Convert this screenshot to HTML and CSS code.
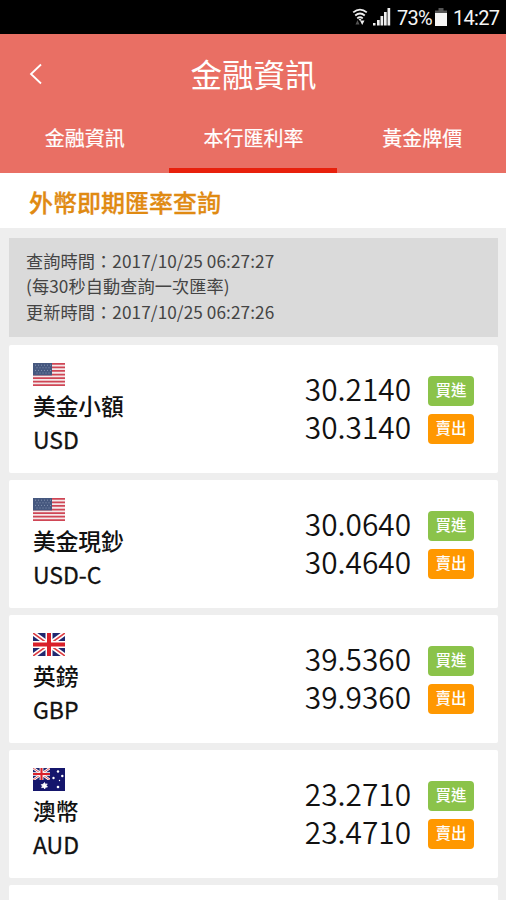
FILE: index.html
```html
<!DOCTYPE html>
<html lang="zh-Hant">
<head>
<meta charset="utf-8">
<title>金融資訊</title>
<link rel="stylesheet" href="styles.css">
</head>
<body>
<svg class="defs" width="0" height="0">
  <defs>
    <symbol id="us" viewBox="0 0 32 23">
      <rect width="32" height="23" fill="#f4e9ea"/>
      <path d="M0 .9h32M0 4.4h32M0 7.9h32M0 11.5h32M0 15h32M0 18.6h32M0 22.1h32" stroke="#cf4655" stroke-width="1.75"/>
      <rect width="19" height="12.4" fill="#46587f"/>
      <path d="M2 2.2h16M3.5 4.8h14M2 7.4h16M3.5 10h14" stroke="#8593b0" stroke-width="1" stroke-dasharray="1 2"/>
    </symbol>
    <symbol id="uk" viewBox="0 0 32 23" preserveAspectRatio="none">
      <rect width="32" height="23" fill="#20276f"/>
      <path d="M0 0l32 23M32 0L0 23" stroke="#fff" stroke-width="5"/>
      <path d="M0 0l32 23M32 0L0 23" stroke="#dc3c42" stroke-width="1.6"/>
      <path d="M16 0v23M0 11.5h32" stroke="#fff" stroke-width="7"/>
      <path d="M16 0v23M0 11.5h32" stroke="#d9202a" stroke-width="4"/>
    </symbol>
    <symbol id="au" viewBox="0 0 32 23">
      <rect width="32" height="23" fill="#15166c"/>
      <svg width="17" height="12" viewBox="0 0 32 23" preserveAspectRatio="none"><use href="#uk"/></svg>
      <path d="M11.5 14.5l.8 1.7 1.9-.3-.9 1.7 1.2 1.4-1.9.2-.9 1.7-1.2-1.5-1.9.3.8-1.7-1.2-1.4 1.9-.3z" fill="#fff" stroke="#fff" stroke-width=".7"/>
      <g fill="#fff"><circle cx="25" cy="3.5" r="1.2"/><circle cx="20.5" cy="10" r="1.2"/><circle cx="29.3" cy="8" r="1.2"/><circle cx="26.5" cy="12.5" r=".7"/><circle cx="25" cy="19" r="1.3"/></g>
    </symbol>
  </defs>
</svg>
<div class="statusbar">
  <svg class="wifi" width="16" height="20" viewBox="0 0 16 20" fill="none">
    <path d="M1.2 5.4Q8-.2 14.8 5.4M3.2 8.5Q8 4.4 12.8 8.5M5.2 11.4Q8 9 10.8 11.4" stroke="#eee" stroke-width="1.8"/>
    <path d="M6.5 12h3L8 14zM8 13.5h4.5L10.2 18z" fill="#eee"/>
    <path d="M3.5 17.5h4L5.500 13z" fill="#555"/>
  </svg>
  <svg class="signal" width="18" height="18" viewBox="0 0 18 18" fill="#eee">
    <path d="M0 15h2.500v2.500H0zM4 12h2.700v5.500H4zM7.500 8h2.700v9.500H7.500zM11 4h2.700v13.500H11zM14.500 0h2.700v17.500h-2.700z"/>
  </svg>
  <span class="percent">73%</span>
  <svg class="battery" width="12" height="18" viewBox="0 0 12 18"><path d="M3.500 0h5v2.500H12V5H0V2.500h3.500z" fill="#555"/><path d="M0 5h12v13H0z" fill="#f5f5f5"/></svg>
  <span class="clock">14:27</span>
</div>
<header class="header">
  <div class="titlebar">
    <svg class="back" width="14" height="22" viewBox="0 0 14 22" fill="none"><path d="M12 1.500L2 11l10 9.500" stroke="#fff" stroke-width="1.800"/></svg>
    <h1>金融資訊</h1>
  </div>
  <nav class="tabs">
    <a>金融資訊</a>
    <a class="active">本行匯利率</a>
    <a>黃金牌價</a>
  </nav>
</header>
<h2 class="section">外幣即期匯率查詢</h2>
<main>
  <div class="info">
    <p>查詢時間：2017/10/25 06:27:27</p>
    <p>(每30秒自動查詢一次匯率)</p>
    <p>更新時間：2017/10/25 06:27:26</p>
  </div>
  <article class="card">
    <div class="currency"><svg class="flag"><use href="#us"/></svg><p>美金小額</p><p class="code">USD</p></div>
    <div class="rates">
      <div class="rate"><span class="value">30.2140</span><span class="tag buy">買進</span></div>
      <div class="rate"><span class="value">30.3140</span><span class="tag sell">賣出</span></div>
    </div>
  </article>
  <article class="card">
    <div class="currency"><svg class="flag"><use href="#us"/></svg><p>美金現鈔</p><p class="code">USD-C</p></div>
    <div class="rates">
      <div class="rate"><span class="value">30.0640</span><span class="tag buy">買進</span></div>
      <div class="rate"><span class="value">30.4640</span><span class="tag sell">賣出</span></div>
    </div>
  </article>
  <article class="card">
    <div class="currency"><svg class="flag"><use href="#uk"/></svg><p>英鎊</p><p class="code">GBP</p></div>
    <div class="rates">
      <div class="rate"><span class="value">39.5360</span><span class="tag buy">買進</span></div>
      <div class="rate"><span class="value">39.9360</span><span class="tag sell">賣出</span></div>
    </div>
  </article>
  <article class="card">
    <div class="currency"><svg class="flag"><use href="#au"/></svg><p>澳幣</p><p class="code">AUD</p></div>
    <div class="rates">
      <div class="rate"><span class="value">23.2710</span><span class="tag buy">買進</span></div>
      <div class="rate"><span class="value">23.4710</span><span class="tag sell">賣出</span></div>
    </div>
  </article>
  <article class="card last"></article>
</main>
</body>
</html>
```

FILE: styles.css
```css
* { box-sizing: border-box; margin: 0; padding: 0; }
body {
  height: 900px;
  overflow: hidden;
  background: #eee;
  color: #111;
  font-family: "Noto Sans CJK TC", sans-serif;
}
svg { display: block; flex: none; }
.defs { position: absolute; }

.statusbar {
  display: flex;
  align-items: center;
  justify-content: flex-end;
  height: 34px;
  padding-right: 7px;
  background: #000;
  color: #f5f5f5;
  font: 400 20px/34px Roboto, sans-serif;
}
.signal { margin: 0 6px 0 5px; }
.percent { width: 34px; padding-top: 1px; letter-spacing: -0.7px; }
.battery { margin: 0 6px 0 4px; }
.clock { width: 46px; padding-top: 1px; letter-spacing: -0.7px; }

.header { height: 139px; background: #e96f64; color: #fff; }
.titlebar { display: flex; align-items: center; height: 80px; padding: 0 30px 2px 29px; }
.titlebar .back { margin-top: 2px; }
.titlebar h1 { flex: 1; padding-right: 12px; text-align: center; font-size: 31.5px; font-weight: 400; line-height: 46px; }
.tabs { display: grid; grid-template-columns: repeat(3, 1fr); height: 59px; }
.tabs a { padding-left: 1px; text-align: center; font-size: 20px; font-weight: 400; line-height: 48px; border-bottom: 5px solid transparent; -webkit-text-stroke: 0.2px #fff; }
.tabs .active { border-color: #e8200c; }

.section {
  height: 55px;
  padding-left: 29px;
  background: #fff;
  color: #e08a12;
  font-size: 24px;
  font-weight: 500;
  line-height: 58px;
  -webkit-text-stroke: 0.3px #e08a12;
}
main { display: grid; gap: 7px; padding: 10px 8px 0 9px; }
.info {
  height: 99px;
  margin-bottom: 1px;
  padding: 10px 17px;
  background: #dadada;
  color: #444;
  font-size: 17.2px;
  font-weight: 400;
  line-height: 25.3px;
  letter-spacing: 0.08px;
}
.card {
  display: flex;
  justify-content: space-between;
  height: 128px;
  padding: 18px 24px 0;
  border-radius: 2px;
  background: #fff;
}
.last { height: 15px; padding: 0; border-radius: 2px 2px 0 0; }
.flag { width: 32px; height: 23px; margin-bottom: 3px; }
.currency { font-size: 22.7px; font-weight: 500; line-height: 33.5px; }
.code { font-size: 23px; font-weight: 400; -webkit-text-stroke: 0.3px #111; }
.rates { padding-top: 8px; }
.rate { display: flex; align-items: center; justify-content: flex-end; height: 38px; }
.value { margin: -4px 17px 0 0; font-size: 29.8px; font-weight: 350; line-height: 38px; }
.tag {
  width: 46px;
  height: 30px;
  margin-top: 1px;
  border-radius: 4px;
  color: #fff;
  font-size: 15.5px;
  font-weight: 500;
  line-height: 27px;
  text-align: center;
}
.buy { background: #8bc34a; }
.sell { background: #ff9800; }
```
